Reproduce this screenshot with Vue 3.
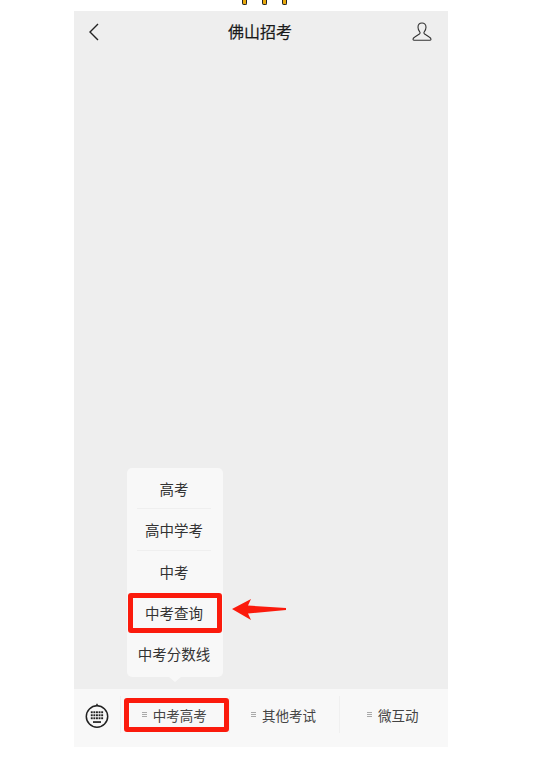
<template>
  <div class="page">
    <div class="clip">
      <span v-for="n in 3" :key="n" class="clip-pin"></span>
    </div>
    <div class="phone">
      <header class="topbar">
        <svg class="back" width="12" height="18" viewBox="0 0 12 18">
          <path d="M10 1 2 9l8 8" fill="none" stroke="#222" stroke-width="1.400" />
        </svg>
        <div class="title">佛山招考</div>
        <svg class="user" width="20" height="20" viewBox="0 0 20 20">
          <path d="M10 1C7.700 1 6 2.800 6 5.300c0 1.900.7 3.300 1.700 4.500.6.700.5 1.700-.3 2.200L2.800 15c-1 .6-1.800 1.200-1.800 2.300 0 .6.300.9.900.9h16.200c.6 0 .9-.3.900-.9 0-1.100-.8-1.700-1.800-2.300l-4.600-3c-.8-.5-.9-1.500-.3-2.200 1-1.200 1.700-2.600 1.700-4.500C14 2.800 12.300 1 10 1z" fill="none" stroke="#333" stroke-width="1.100" />
        </svg>
      </header>

      <main class="chat"></main>

      <div class="menu">
        <div v-for="item in subMenu" :key="item.label" class="menu-item" :class="{ line: item.line }">
          {{ item.label }}
        </div>
        <span class="menu-tail"></span>
      </div>
      <div class="mark mark-menu"></div>
      <svg class="arrow" width="56" height="24" viewBox="0 0 56 24">
        <path d="M0 11 19 1l-3 6.500 38 2.500v2l-38 3.500 3 6.500z" fill="#fb1a0c" />
      </svg>

      <footer class="tabbar">
        <div class="kb">
          <svg width="26" height="28" viewBox="0 0 26 28">
            <circle cx="13" cy="15.500" r="10.700" fill="none" stroke="#222" stroke-width="1.500" />
            <path d="M11.300 5 13 2.300 14.700 5z" fill="#222" />
            <g fill="#222">
              <rect v-for="k in keys" :key="k.id" :x="k.x" :y="k.y" width="1.900" height="1.900" />
              <rect x="9" y="20.200" width="8" height="1.700" />
            </g>
          </svg>
        </div>
        <div v-for="tab in tabs" :key="tab" class="tab">
          <span class="burger"><i></i><i></i><i></i></span>
          <span>{{ tab }}</span>
        </div>
      </footer>
      <div class="mark mark-tab"></div>
    </div>
  </div>
</template>

<script setup>
const subMenu = [
  { label: '高考', line: true },
  { label: '高中学考', line: true },
  { label: '中考' },
  { label: '中考查询' },
  { label: '中考分数线' }
];

const tabs = ['中考高考', '其他考试', '微互动'];

// keyboard dots, three rows of five
const keys = [];
for (let r = 0; r < 3; r++) {
  for (let c = 0; c < 5; c++) {
    keys.push({ id: `${r}-${c}`, x: 6.800 + c * 2.600, y: 10.300 + r * 3 });
  }
}
</script>

<style>
html, body {
  margin: 0;
  background: #fff;
}
</style>

<style scoped>
.page {
  width: 559px;
  height: 762px;
  position: relative;
  overflow: hidden;
  background: #fff;
  font-family: "Liberation Sans", "Noto Sans CJK SC", sans-serif;
}

.clip {
  position: absolute;
  left: 242px;
  top: 0;
  display: flex;
  gap: 15px;
}

.clip-pin {
  width: 3px;
  height: 4px;
  background: #e8a90c;
  border: 0 solid #222;
  border-width: 0 1px 1px;
  border-radius: 0 0 2px 2px;
}

.phone {
  position: absolute;
  left: 74px;
  top: 11px;
  width: 374px;
  height: 736px;
  display: flex;
  flex-direction: column;
  background: #eeeeee;
}

.topbar {
  height: 42px;
  display: flex;
  align-items: center;
  justify-content: space-between;
  padding: 0 16px 0 14px;
  position: relative;
}

.title {
  position: absolute;
  left: 0;
  right: 2px;
  top: 8px;
  text-align: center;
  font-size: 16px;
  font-weight: 400;
  -webkit-text-stroke: 0.2px #1a1a1a;
  color: #1a1a1a;
}

.chat {
  flex: 1;
}

.menu {
  position: absolute;
  left: 53px;
  top: 457px;
  width: 96px;
  height: 209px;
  box-sizing: border-box;
  background: #f8f8f8;
  border-radius: 5px;
}

.menu-item {
  height: 41.300px;
  margin: 0 12px 0 10px;
  display: flex;
  align-items: center;
  justify-content: center;
  font-size: 14.500px;
  color: #333;
  white-space: nowrap;
}

.menu-item.line {
  border-bottom: 1px solid #efefef;
  box-sizing: border-box;
}

.menu-tail {
  position: absolute;
  left: 42px;
  bottom: -5px;
  width: 0;
  height: 0;
  border-left: 6px solid transparent;
  border-right: 6px solid transparent;
  border-top: 5px solid #f8f8f8;
}

.mark {
  position: absolute;
  box-sizing: border-box;
  border: 5px solid #fb1a0c;
  border-radius: 3px;
}

.mark-menu {
  left: 54px;
  top: 582px;
  width: 94px;
  height: 40px;
}

.mark-tab {
  left: 50px;
  top: 687px;
  width: 105px;
  height: 34px;
}

.arrow {
  position: absolute;
  left: 158px;
  top: 587px;
}

.tabbar {
  height: 58px;
  display: flex;
  background: #f8f8f8;
  box-sizing: border-box;
  padding: 7px 0 14px;
}

.kb {
  width: 46px;
  flex: none;
  display: flex;
  align-items: center;
  justify-content: center;
  box-sizing: border-box;
}

.tab {
  flex: 1;
  display: flex;
  align-items: center;
  justify-content: center;
  gap: 6px;
  padding-right: 2px;
  font-size: 13.500px;
  color: #444;
  border-left: 1px solid #f0f0f0;
}

.burger {
  display: flex;
  flex-direction: column;
  gap: 1px;
}

.burger i {
  display: block;
  width: 5px;
  height: 1px;
  background: #aaa;
}
</style>
